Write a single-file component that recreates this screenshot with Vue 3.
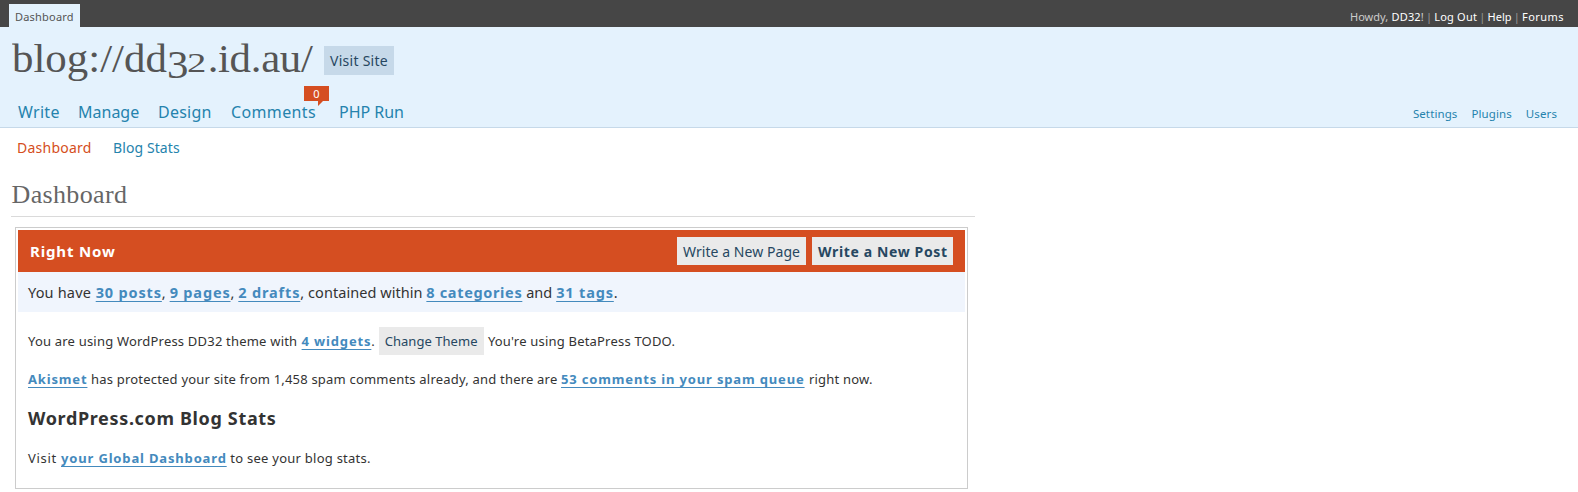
<script setup>
const mainMenu = [
  { label: 'Write', cls: 'write' },
  { label: 'Manage', cls: 'manage' },
  { label: 'Design', cls: 'design' },
  { label: 'Comments', cls: 'comments', count: 0 },
  { label: 'PHP Run', cls: 'php' },
]
const sideMenu = ['Settings', 'Plugins', 'Users']
</script>

<template>
  <div class="admin">
    <div class="topbar">
      <a class="tab">Dashboard</a>
      <div class="user">
        <span class="howdy">Howdy, </span><a class="name">DD32</a><span>!</span>
        <i>|</i><a class="logout">Log Out</a>
        <i>|</i><a class="help">Help</a>
        <i>|</i><a class="forums">Forums</a>
      </div>
    </div>

    <header class="head">
      <div class="brand">
        <h1><span class="lead">blog://dd</span><span class="three">3</span><span class="two">2</span><span class="tail">.id.au/</span></h1>
        <a class="visit">Visit Site</a>
      </div>
      <nav class="menus">
        <div class="main-menu">
          <a v-for="m in mainMenu" :key="m.label" :class="m.cls">{{ m.label }}<span v-if="m.count !== undefined" class="bubble">{{ m.count }}<svg width="6" height="5" viewBox="0 0 6 5"><path d="M0 0H6L1 5V0Z" fill="#d54e21" /></svg></span></a>
        </div>
        <div class="side-menu">
          <a v-for="s in sideMenu" :key="s">{{ s }}</a>
        </div>
      </nav>
    </header>

    <nav class="submenu">
      <a class="current">Dashboard</a>
      <a class="stats">Blog Stats</a>
    </nav>

    <main class="wrap">
      <h2>Dashboard</h2>
      <section class="rightnow">
        <div class="bar">
          <h3>Right Now</h3>
          <a class="btn page">Write a New Page</a>
          <a class="btn post">Write a New Post</a>
        </div>
        <p class="youhave"><span>You have</span> <a>30 posts</a>, <a>9 pages</a>, <a>2 drafts</a>, contained within <a class="cats">8 categories</a> and <a>31 tags</a>.</p>
        <p class="theme">You are using WordPress DD32 theme with <a>4 widgets</a>. <span class="btn change">Change Theme</span> You're using BetaPress TODO.</p>
        <p class="akismet"><a>Akismet</a> has protected your site from 1,458 spam comments already, and there are <a class="queue">53 comments in your spam queue</a> right now.</p>
        <h4>WordPress.com Blog Stats</h4>
        <p class="global"><span>Visit</span> <a>your Global Dashboard</a> to see your blog stats.</p>
      </section>
    </main>
  </div>
</template>

<style>
body { margin: 0; background: #fff; }
</style>

<style scoped>
.admin {
  height: 492px;
  overflow: hidden;
  font-family: "Noto Sans", "Open Sans", sans-serif;
  color: #333;
  white-space: nowrap;
}
h1, h2, h3, h4, p { margin: 0; font-weight: 400; }
.topbar {
  display: flex;
  justify-content: space-between;
  align-items: flex-end;
  height: 27px;
  background: #464646;
  font-size: 11px;
  line-height: 25px;
}
.tab {
  box-sizing: border-box;
  width: 71px;
  height: 23px;
  margin-left: 9px;
  padding-left: 6px;
  background: #e4f2fd;
  color: #555;
  letter-spacing: 0.2px;
}
.user { display: flex; height: 23px; margin-right: 14px; color: #ccc; }
.user a { color: #fff; }
.user i { width: 10.5px; text-align: center; font-style: normal; color: #999; }
.howdy { width: 41.5px; }
.name { letter-spacing: 0.15px; }
.logout { letter-spacing: 0.2px; }
.forums { letter-spacing: 0.45px; }
.head { height: 100px; background: #e4f2fd; border-bottom: 1px solid #c6d9e9; }
.brand { display: flex; height: 61px; padding-left: 12px; }
h1 {
  display: flex;
  align-items: baseline;
  box-sizing: border-box;
  width: 312px;
  padding-top: 1px;
  font: 39px/61px "Liberation Serif", serif;
  color: #555;
  transform: scaleX(1.1);
  transform-origin: left;
}
.three { position: relative; top: 6px; width: 18.5px; }
.two { width: 18.5px; font-size: 27px; transform: scaleX(1.3); transform-origin: left; }
.tail { letter-spacing: -0.3px; }
.visit {
  box-sizing: border-box;
  width: 70px;
  height: 29px;
  margin-top: 19px;
  padding-left: 6px;
  background: #c6d9e9;
  color: #264761;
  font-size: 14px;
  line-height: 29px;
  letter-spacing: 0.27px;
}
.menus { display: flex; justify-content: space-between; height: 39px; color: #2583ad; }
.main-menu { display: flex; padding: 8px 0 0 18px; font-size: 16px; line-height: 32px; }
.write { width: 60px; letter-spacing: 0.3px; }
.manage { width: 80px; }
.design { width: 73px; letter-spacing: 0.25px; }
.comments { position: relative; width: 108px; letter-spacing: 0.36px; }
.php { letter-spacing: -0.02px; }
.bubble {
  position: absolute;
  left: 73px;
  top: -10px;
  width: 25px;
  height: 15px;
  background: #d54e21;
  color: #fff;
  font-size: 11px;
  line-height: 16px;
  letter-spacing: 0;
  text-align: center;
}
.bubble svg { position: absolute; left: 13px; top: 15px; display: block; }
.side-menu {
  display: flex;
  gap: 14px;
  padding: 10px 21px 0 0;
  font-size: 11.5px;
  line-height: 31px;
  letter-spacing: 0.1px;
}
.submenu { display: flex; height: 39px; padding-left: 17px; font-size: 14px; line-height: 39px; color: #2583ad; }
.current { width: 96px; color: #d54e21; letter-spacing: 0.24px; }
.stats { letter-spacing: 0.1px; }
.wrap { width: 964px; margin-left: 11px; }
h2 {
  height: 37px;
  padding: 12px 0 0 0.5px;
  border-bottom: 1px solid #dadada;
  font: 26px/32px "Liberation Serif", serif;
  letter-spacing: 0.35px;
  color: #666;
}
.rightnow {
  box-sizing: border-box;
  width: 953px;
  height: 262px;
  margin: 10px 0 0 4px;
  padding: 2px;
  border: 1px solid #ccc;
  font-size: 13px;
  line-height: 28px;
  letter-spacing: 0.2px;
}
.bar { display: flex; height: 42px; padding: 0 12px; background: #d54e21; }
h3 { flex: 1; color: #fff; font-size: 15px; font-weight: 700; line-height: 42px; letter-spacing: 0.85px; }
.btn { box-sizing: border-box; height: 28px; padding-left: 6px; background: #eaeaea; color: #264761; }
.bar .btn { margin-top: 7px; font-size: 14px; line-height: 29px; }
.page { width: 129px; margin-right: 6px; letter-spacing: 0.06px; }
.post { width: 141px; font-weight: 700; letter-spacing: 0.63px; }
p, h4 { height: 28px; padding-left: 10px; }
p a {
  color: #448abd;
  font-weight: 700;
  letter-spacing: 0.84px;
  text-decoration: underline 1px;
  text-underline-offset: 3px;
  text-decoration-skip-ink: none;
}
.youhave { height: 40px; background: #f0f5fd; font-size: 14.5px; line-height: 40px; letter-spacing: 0.05px; }
.youhave span { margin-right: 0.8px; letter-spacing: 0.18px; }
.youhave .cats { letter-spacing: 0.65px; }
.theme { margin-top: 15px; }
.theme a { margin-left: 0.7px; }
.change { display: inline-block; width: 105px; margin-right: 0.7px; vertical-align: top; letter-spacing: 0.05px; }
.akismet { margin-top: 10px; }
.queue { margin-right: 0.8px; }
h4 { margin-top: 11px; font-size: 18px; font-weight: 700; letter-spacing: 0.65px; }
.global { margin-top: 12px; letter-spacing: 0.25px; }
.global span { margin-right: 0.6px; letter-spacing: 0.67px; }
</style>
